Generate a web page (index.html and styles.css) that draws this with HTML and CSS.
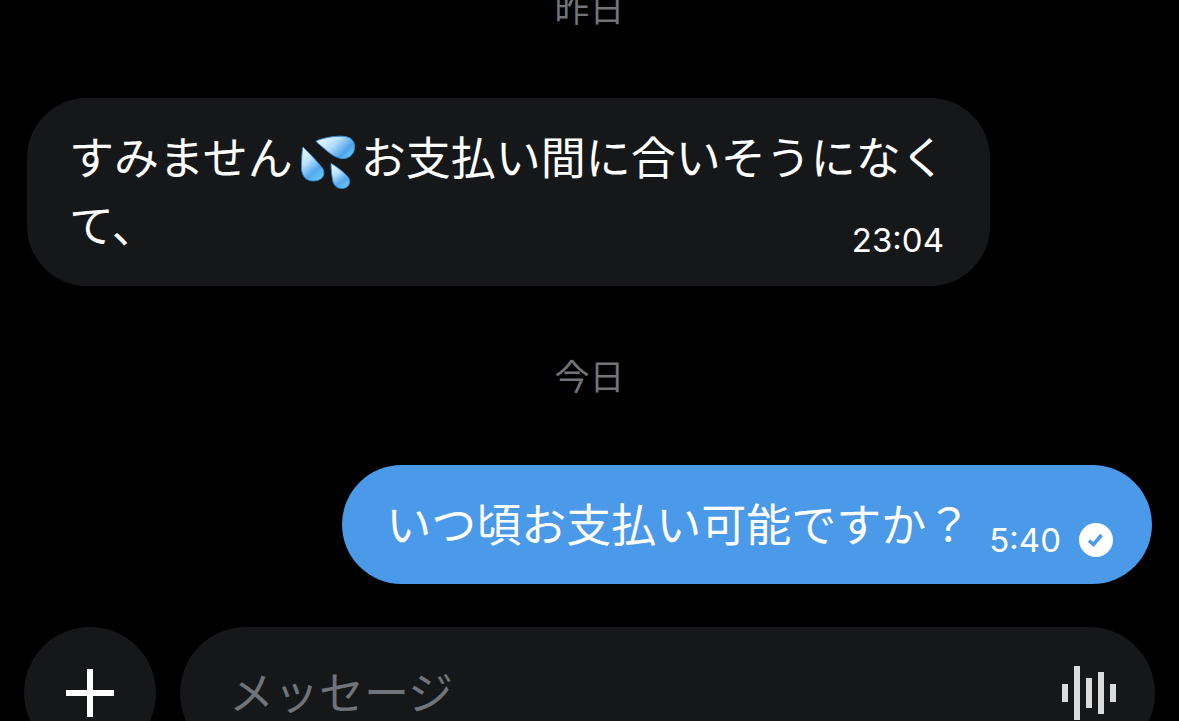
FILE: index.html
```html
<!DOCTYPE html>
<html lang="ja">
<head>
<meta charset="utf-8">
<meta name="viewport" content="width=device-width, initial-scale=1">
<title>メッセージ</title>
<link rel="stylesheet" href="styles.css">
</head>
<body>
<main class="chat">
  <section class="thread">
    <h2 class="day day-first">昨日</h2>
    <article class="bubble bubble-in">
      <p class="text">すみません<svg class="emoji" viewBox="-2 0 68 60" role="img" aria-label="汗">
        <defs>
          <linearGradient id="dropTall" x1="0.1" y1="0" x2="0.65" y2="1">
            <stop offset="0" stop-color="#f2fbff"/>
            <stop offset="0.4" stop-color="#b9e2fc"/>
            <stop offset="0.75" stop-color="#55a9ee"/>
            <stop offset="1" stop-color="#63c4f6"/>
          </linearGradient>
          <linearGradient id="dropWide" x1="0" y1="0.1" x2="1" y2="0.7">
            <stop offset="0" stop-color="#f2fbff"/>
            <stop offset="0.45" stop-color="#b5dffb"/>
            <stop offset="0.8" stop-color="#50a3ea"/>
            <stop offset="1" stop-color="#63c4f6"/>
          </linearGradient>
        </defs>
        <g stroke="#3488d2" stroke-width="1">
          <path fill="url(#dropWide)" d="M22 7.5C31 4 43 2.500 50 3.500C57 4.500 60 9 59.500 15C59 22 53 26.500 46 25.500C37 24 29 15 22 9.500C21 8.500 21 8 22 7.500Z"/>
          <path fill="url(#dropTall)" d="M8.500 14.500C15 21 23 29 28 36C31 43 26 48 18.500 48C11 48 7 43 6.500 36C6.300 28 7 21 7.500 15C7.700 14 8 14 8.500 14.500Z"/>
          <path fill="url(#dropTall)" d="M36.500 30.500C42 34 49 39 53 44C57 50 53 55.500 47 55.500C41 55.500 38 51 37.500 46C36.500 41 36 35 36 31C36 30.500 36.200 30.300 36.500 30.500Z"/>
        </g>
      </svg>お支払い間に合いそうになくて、<time class="stamp">23:04</time></p>
    </article>
    <h2 class="day">今日</h2>
    <article class="bubble bubble-out">
      <p class="text">いつ頃お支払い可能ですか？</p>
      <footer class="status">
        <time class="stamp">5:40</time>
        <svg class="check" viewBox="0 0 34 34" role="img" aria-label="既読">
          <circle cx="17" cy="17" r="17" fill="#fff"/>
          <path d="M10 17.500L14.500 21.500L22.500 12" fill="none" stroke="#4b99e9" stroke-width="3.500"/>
        </svg>
      </footer>
    </article>
  </section>
  <form class="composer">
    <button class="add" type="button" aria-label="追加">
      <svg class="plus" viewBox="0 0 50 50"><path d="M25 1V49M1 25H49" stroke="#fff" stroke-width="6"/></svg>
    </button>
    <div class="field">
      <input class="input" type="text" placeholder="メッセージ" aria-label="メッセージ">
      <button class="voice" type="button" aria-label="音声">
        <svg class="wave" viewBox="0 0 56 54"><path d="M4 18V36M16 0V54M28 12V42M40 6V48M52 18V36" stroke="#dcdcdc" stroke-width="6"/></svg>
      </button>
    </div>
  </form>
</main>
</body>
</html>
```
FILE: styles.css
```css
* {
  box-sizing: border-box;
}

body {
  margin: 0;
  background: #000;
  color: #fff;
  font-family: "Noto Sans CJK JP", sans-serif;
  overflow: hidden;
}

.chat {
  height: 100vh;
  overflow: hidden;
}

.thread {
  display: flex;
  flex-direction: column;
  padding: 0 27px;
}

.day {
  margin: 66px 0 68px;
  color: #707377;
  font-size: 35px;
  font-weight: 400;
  line-height: 45px;
  text-align: center;
}

.day-first {
  margin: -16px 0 69px;
}

.bubble {
  border-radius: 60px;
}

.bubble-in {
  align-self: flex-start;
  max-width: 963px;
  padding: 24px 42px 28px;
  background: #161719;
}

.bubble-out {
  display: flex;
  align-items: flex-end;
  gap: 18px;
  align-self: flex-end;
  padding: 24px 39px 27px 44px;
  background: #4b99e9;
}

.text {
  margin: 0;
  font-size: 45px;
  line-height: 68px;
}

.emoji {
  width: 68px;
  height: 60px;
  margin: -10px 0;
  vertical-align: middle;
}

.stamp {
  font-family: Inter, sans-serif;
  font-size: 33px;
  line-height: 34px;
}

.text .stamp {
  float: right;
  margin: 33px 4px 0 0;
}

.status {
  display: flex;
  align-items: center;
  gap: 18px;
}

.check {
  width: 34px;
  height: 34px;
}

.composer {
  display: flex;
  gap: 24px;
  padding: 43px 24px 0;
}

.add {
  display: flex;
  align-items: center;
  justify-content: center;
  flex: none;
  width: 132px;
  height: 132px;
  padding: 0;
  border: 0;
  border-radius: 50%;
  background: #161719;
}

.plus {
  width: 50px;
  height: 50px;
}

.field {
  display: flex;
  flex: 1;
  align-items: center;
  min-width: 0;
  padding: 0 38px 0 49px;
  border-radius: 66px;
  background: #161719;
}

.input {
  flex: 1;
  min-width: 0;
  padding: 0 0 6px;
  border: 0;
  outline: 0;
  background: transparent;
  color: #fff;
  font: inherit;
  font-size: 45px;
}

.input::placeholder {
  color: #707377;
  opacity: 1;
}

.voice {
  display: flex;
  padding: 0;
  border: 0;
  background: transparent;
}

.wave {
  width: 56px;
  height: 54px;
}
```
